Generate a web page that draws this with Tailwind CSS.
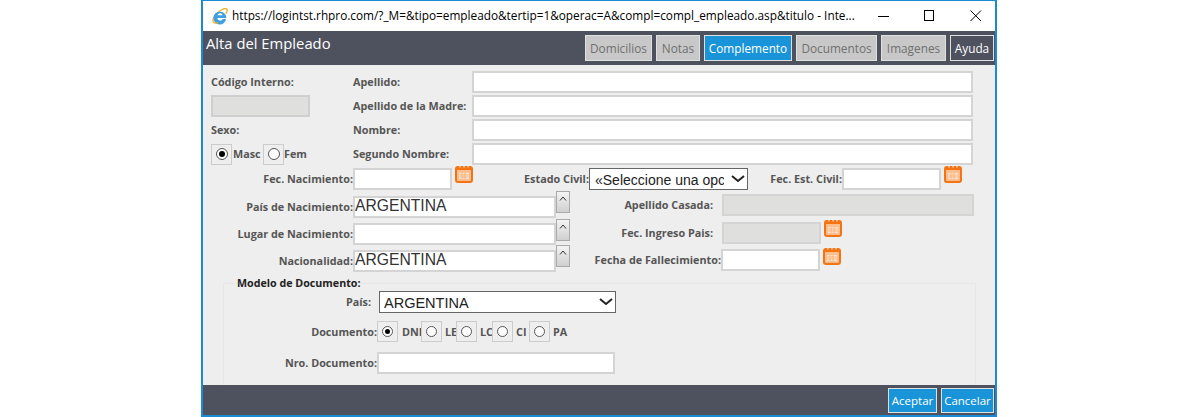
<!DOCTYPE html>
<html lang="en">
<head>
    <meta charset="UTF-8">
    <title>Alta del Empleado</title>
    <script src="https://cdn.jsdelivr.net/npm/@tailwindcss/browser@4"></script>
</head>
<body class="bg-white font-['Open_Sans',sans-serif] overflow-hidden">

    <!-- popup window -->
    <div class="ml-[201px] w-[796px] h-[417px] border-x-2 border-b-2 border-t border-[#1a8ad4] flex flex-col">

        <!-- IE title bar -->
        <div class="h-[30px] shrink-0 flex items-center bg-white pl-[8px]">
            <svg width="18" height="18" viewBox="0 0 20 20" class="shrink-0 mr-[3px]">
                <path d="M2.5 16.5C1 13 6 5.5 13 2.5c3-1.2 5.2-.8 5 1.5-.1 1.2-.8 2.4-1.5 3.4" fill="none" stroke="#f2b01e" stroke-width="1.5"/>
                <path d="M2.8 11.5a7.2 7.2 0 0 1 14-1.2l.1 1.8H7a3.2 3.2 0 0 0 6 1.2h3.7a7 7 0 0 1-13.9-1.8z" fill="#3f9fe0"/>
                <path d="M7.2 9.3h5.8a3 3 0 0 0-5.8 0z" fill="#fff"/>
                <path d="M2.5 16.5c.6 1.8 3 1.8 5.5.8" fill="none" stroke="#f2b01e" stroke-width="1.5"/>
            </svg>
            <span class="text-[11.8px] text-black whitespace-nowrap w-[643px] shrink-0">https://logintst.rhpro.com/?_M=&amp;tipo=empleado&amp;tertip=1&amp;operac=A&amp;compl=compl_empleado.asp&amp;titulo - Inte...</span>
            <svg width="12" height="12" viewBox="0 0 12 12" class="ml-[3px] shrink-0"><path d="M0 6.5h11" stroke="#000"/></svg>
            <svg width="12" height="12" viewBox="0 0 12 12" class="ml-[33px] shrink-0"><rect x="1.5" y=".5" width="9" height="10" fill="none" stroke="#000"/></svg>
            <svg width="12" height="12" viewBox="0 0 12 12" class="ml-[35px] shrink-0"><path d="M.5.5l10.5 10.5M11 .5L.5 11" stroke="#000"/></svg>
        </div>

        <!-- header with tabs -->
        <div class="h-[34px] shrink-0 bg-[#4e525e] flex justify-between pl-[3px] pr-[1px]">
            <h1 class="text-[14.8px] leading-[24px] text-white">Alta del Empleado</h1>
            <div class="flex gap-[4px] pt-[4px] text-[11.8px] text-[#707070] text-center">
                <a class="w-[67px] h-[26px] leading-[24px] bg-[#c8c8c8] border border-[#e0e0e0]">Domicilios</a>
                <a class="w-[44px] h-[26px] leading-[24px] bg-[#c8c8c8] border border-[#e0e0e0]">Notas</a>
                <a class="w-[88px] h-[26px] leading-[24px] bg-[#1a94d8] border border-[#e0e0e0] text-white">Complemento</a>
                <a class="w-[81px] h-[26px] leading-[24px] bg-[#c8c8c8] border border-[#e0e0e0]">Documentos</a>
                <a class="w-[65px] h-[26px] leading-[24px] bg-[#c8c8c8] border border-[#e0e0e0]">Imagenes</a>
                <a class="w-[44px] h-[26px] leading-[24px] bg-[#4e525e] border border-[#e0e0e0] text-white">Ayuda</a>
            </div>
        </div>

        <!-- form body -->
        <div class="flex-1 bg-[#eeeeee] pl-[8px] pt-[6px] text-[10.8px] font-bold text-[#555] leading-[22px] overflow-hidden">

            <!-- top block -->
            <div class="flex">
                <div class="w-[142px] flex flex-col gap-[2px]">
                    <div class="h-[22px]">Código Interno:</div>
                    <div class="h-[22px]"><input disabled class="w-[99px] h-[22px] bg-[#dfdfdd] border-2 border-[#cfcfcf]"></div>
                    <div class="h-[22px]">Sexo:</div>
                    <div class="h-[22px] flex items-center">
                        <span class="w-[21px] h-[21px] border border-[#ccc] flex items-center justify-center"><span class="w-[12px] h-[12px] rounded-full border border-[#555] bg-white flex items-center justify-center"><span class="w-[6px] h-[6px] rounded-full bg-black"></span></span></span>
                        <span class="ml-px w-[29px]">Masc</span>
                        <span class="ml-px w-[21px] h-[21px] border border-[#ccc] flex items-center justify-center"><span class="w-[12px] h-[12px] rounded-full border border-[#555] bg-white"></span></span>
                        <span>Fem</span>
                    </div>
                </div>
                <div class="flex flex-col gap-[2px]">
                    <div class="flex h-[22px]"><label class="w-[119px]">Apellido:</label><input class="w-[501px] h-[22px] bg-white border-2 border-[#d4d4d4]"></div>
                    <div class="flex h-[22px]"><label class="w-[119px]">Apellido de la Madre:</label><input class="w-[501px] h-[22px] bg-white border-2 border-[#d4d4d4]"></div>
                    <div class="flex h-[22px]"><label class="w-[119px]">Nombre:</label><input class="w-[501px] h-[22px] bg-white border-2 border-[#d4d4d4]"></div>
                    <div class="flex h-[22px]"><label class="w-[119px]">Segundo Nombre:</label><input class="w-[501px] h-[22px] bg-white border-2 border-[#d4d4d4]"></div>
                </div>
            </div>

            <!-- fecha nacimiento / estado civil row -->
            <div class="flex h-[22px] mt-[3px]">
                <label class="w-[142px] text-right">Fec. Nacimiento:</label>
                <input class="w-[99px] h-[22px] bg-white border-2 border-[#d4d4d4]">
                <svg width="18" height="18" viewBox="0 0 18 18" class="ml-[3px] -mt-[3px] shrink-0"><rect x="1" y="2" width="16" height="15" rx="2" fill="#fbbf8f" stroke="#f57312" stroke-width="2"/><path d="M1 2h16v3H1z" fill="#f57312"/><path d="M5 .5v2M9 .5v2M13 .5v2" stroke="#fff"/><path d="M4 8h10v6H4z" fill="#fde3cc"/><path d="M4 10h10M4 12h10M7 8v6M10 8v6" stroke="#f9a867" stroke-width=".7"/></svg>
                <label class="w-[116px] text-right">Estado Civil:</label>
                <div class="relative w-[159px] h-[22px]">
                    <select class="appearance-none w-full h-full bg-white border border-[#666] pl-[5px] pr-[23px] font-['Liberation_Sans',sans-serif] font-normal text-[14px] text-[#222]"><option>«Seleccione una opción»</option></select>
                    <svg width="14" height="8" viewBox="0 0 14 8" class="absolute right-[3px] top-[7px]"><path d="M1 1l6 5 6-5" fill="none" stroke="#222" stroke-width="2"/></svg>
                </div>
                <label class="w-[94px] text-right">Fec. Est. Civil:</label>
                <input class="w-[99px] h-[22px] bg-white border-2 border-[#d4d4d4]">
                <svg width="18" height="18" viewBox="0 0 18 18" class="ml-[3px] -mt-[3px] shrink-0"><rect x="1" y="2" width="16" height="15" rx="2" fill="#fbbf8f" stroke="#f57312" stroke-width="2"/><path d="M1 2h16v3H1z" fill="#f57312"/><path d="M5 .5v2M9 .5v2M13 .5v2" stroke="#fff"/><path d="M4 8h10v6H4z" fill="#fde3cc"/><path d="M4 10h10M4 12h10M7 8v6M10 8v6" stroke="#f9a867" stroke-width=".7"/></svg>
            </div>

            <!-- two column block -->
            <div class="flex">
                <div class="w-[365px] shrink-0 flex flex-col gap-[5px] mt-[6px]">
                    <div class="flex h-[22px]">
                        <label class="w-[142px] text-right">País de Nacimiento:</label>
                        <input value="ARGENTINA" class="w-[203px] h-[22px] bg-white border-2 border-[#d4d4d4] font-['Liberation_Sans',sans-serif] font-normal text-[15.7px] text-[#333] pb-[2px]">
                        <button class="w-[14px] h-[22px] -mt-[5px] flex justify-center pt-[4px] bg-gradient-to-b from-[#f4f4f4] to-[#cfcfcf] border border-[#aaa]"><svg width="8" height="5" viewBox="0 0 8 5"><path d="M1 4.5L4 1l3 3.5" fill="none" stroke="#333"/></svg></button>
                    </div>
                    <div class="flex h-[22px]">
                        <label class="w-[142px] text-right">Lugar de Nacimiento:</label>
                        <input class="w-[203px] h-[22px] bg-white border-2 border-[#d4d4d4]">
                        <button class="w-[14px] h-[22px] -mt-[4px] flex justify-center pt-[4px] bg-gradient-to-b from-[#f4f4f4] to-[#cfcfcf] border border-[#aaa]"><svg width="8" height="5" viewBox="0 0 8 5"><path d="M1 4.5L4 1l3 3.5" fill="none" stroke="#333"/></svg></button>
                    </div>
                    <div class="flex h-[22px]">
                        <label class="w-[142px] text-right">Nacionalidad:</label>
                        <input value="ARGENTINA" class="w-[203px] h-[22px] bg-white border-2 border-[#d4d4d4] font-['Liberation_Sans',sans-serif] font-normal text-[15.7px] text-[#333] pb-[2px]">
                        <button class="w-[14px] h-[22px] -mt-[5px] flex justify-center pt-[4px] bg-gradient-to-b from-[#f4f4f4] to-[#cfcfcf] border border-[#aaa]"><svg width="8" height="5" viewBox="0 0 8 5"><path d="M1 4.5L4 1l3 3.5" fill="none" stroke="#333"/></svg></button>
                    </div>
                </div>
                <div class="flex flex-col mt-[4px]">
                    <div class="flex h-[22px]">
                        <label class="w-[146px] pr-[9px] text-right">Apellido Casada:</label>
                        <input disabled class="w-[252px] h-[22px] bg-[#dfdfdd] border-2 border-[#d4d4d4]">
                    </div>
                    <div class="flex h-[22px] mt-[6px]">
                        <label class="w-[146px] pr-[9px] text-right">Fec. Ingreso Pais:</label>
                        <input disabled class="w-[99px] h-[22px] bg-[#dfdfdd] border-2 border-[#d4d4d4]">
                        <svg width="18" height="18" viewBox="0 0 18 18" class="ml-[3px] -mt-[3px] shrink-0"><rect x="1" y="2" width="16" height="15" rx="2" fill="#fbbf8f" stroke="#f57312" stroke-width="2"/><path d="M1 2h16v3H1z" fill="#f57312"/><path d="M5 .5v2M9 .5v2M13 .5v2" stroke="#fff"/><path d="M4 8h10v6H4z" fill="#fde3cc"/><path d="M4 10h10M4 12h10M7 8v6M10 8v6" stroke="#f9a867" stroke-width=".7"/></svg>
                    </div>
                    <div class="flex h-[22px] mt-[5px]">
                        <label class="w-[145px] text-right">Fecha de Fallecimiento:</label>
                        <input class="w-[99px] h-[22px] bg-white border-2 border-[#d4d4d4]">
                        <svg width="18" height="18" viewBox="0 0 18 18" class="ml-[3px] -mt-[2px] shrink-0"><rect x="1" y="2" width="16" height="15" rx="2" fill="#fbbf8f" stroke="#f57312" stroke-width="2"/><path d="M1 2h16v3H1z" fill="#f57312"/><path d="M5 .5v2M9 .5v2M13 .5v2" stroke="#fff"/><path d="M4 8h10v6H4z" fill="#fde3cc"/><path d="M4 10h10M4 12h10M7 8v6M10 8v6" stroke="#f9a867" stroke-width=".7"/></svg>
                    </div>
                </div>
            </div>

            <!-- document fieldset -->
            <fieldset class="ml-[12px] mt-[3px] w-[753px] border border-[#e6e6e6] border-b-0 h-[110px] px-[13px]">
                <legend class="text-[#222] text-[10.7px] leading-[16px]">Modelo de Documento:</legend>
                <div class="flex h-[22px]">
                    <label class="w-[134px] text-right">País:</label>
                    <div class="relative ml-[8px] w-[237px] h-[22px]">
                        <select class="appearance-none w-full h-full bg-white border border-[#666] pl-[4px] font-['Liberation_Sans',sans-serif] font-normal text-[14.5px] text-[#222]"><option>ARGENTINA</option></select>
                        <svg width="14" height="8" viewBox="0 0 14 8" class="absolute right-[3px] top-[7px]"><path d="M1 1l6 5 6-5" fill="none" stroke="#222" stroke-width="2"/></svg>
                    </div>
                </div>
                <div class="flex h-[21px] mt-[8px] items-center">
                    <label class="w-[140px] text-right">Documento:</label>
                    <span class="w-[21px] h-[21px] border border-[#ccc] flex items-center justify-center"><span class="w-[11px] h-[11px] rounded-full border border-[#555] bg-white flex items-center justify-center"><span class="w-[5px] h-[5px] rounded-full bg-black"></span></span></span>
                    <span class="ml-[4px] w-[19px]">DNI</span>
                    <span class="w-[21px] h-[21px] border border-[#ccc] flex items-center justify-center"><span class="w-[11px] h-[11px] rounded-full border border-[#555] bg-white"></span></span>
                    <span class="ml-[3px] w-[11px]">LE</span>
                    <span class="w-[21px] h-[21px] border border-[#ccc] flex items-center justify-center"><span class="w-[11px] h-[11px] rounded-full border border-[#555] bg-white"></span></span>
                    <span class="ml-[3px] w-[12px]">LC</span>
                    <span class="w-[21px] h-[21px] border border-[#ccc] flex items-center justify-center"><span class="w-[11px] h-[11px] rounded-full border border-[#555] bg-white"></span></span>
                    <span class="ml-[3px] w-[13px]">CI</span>
                    <span class="w-[21px] h-[21px] border border-[#ccc] flex items-center justify-center"><span class="w-[11px] h-[11px] rounded-full border border-[#555] bg-white"></span></span>
                    <span class="ml-[3px]">PA</span>
                </div>
                <div class="flex h-[22px] mt-[10px]">
                    <label class="w-[140px] text-right">Nro. Documento:</label>
                    <input class="w-[238px] h-[22px] bg-white border-2 border-[#d4d4d4]">
                </div>
            </fieldset>
        </div>

        <!-- footer -->
        <div class="h-[30px] shrink-0 bg-[#4e525e] flex justify-end items-start gap-[4px] pt-[3px] pr-[1px] text-[11.5px] text-white">
            <button class="w-[49px] h-[25px] bg-[#1a94d8] border border-[#e0e0e0]">Aceptar</button>
            <button class="w-[53px] h-[25px] bg-[#1a94d8] border border-[#e0e0e0]">Cancelar</button>
        </div>
    </div>

</body>
</html>
